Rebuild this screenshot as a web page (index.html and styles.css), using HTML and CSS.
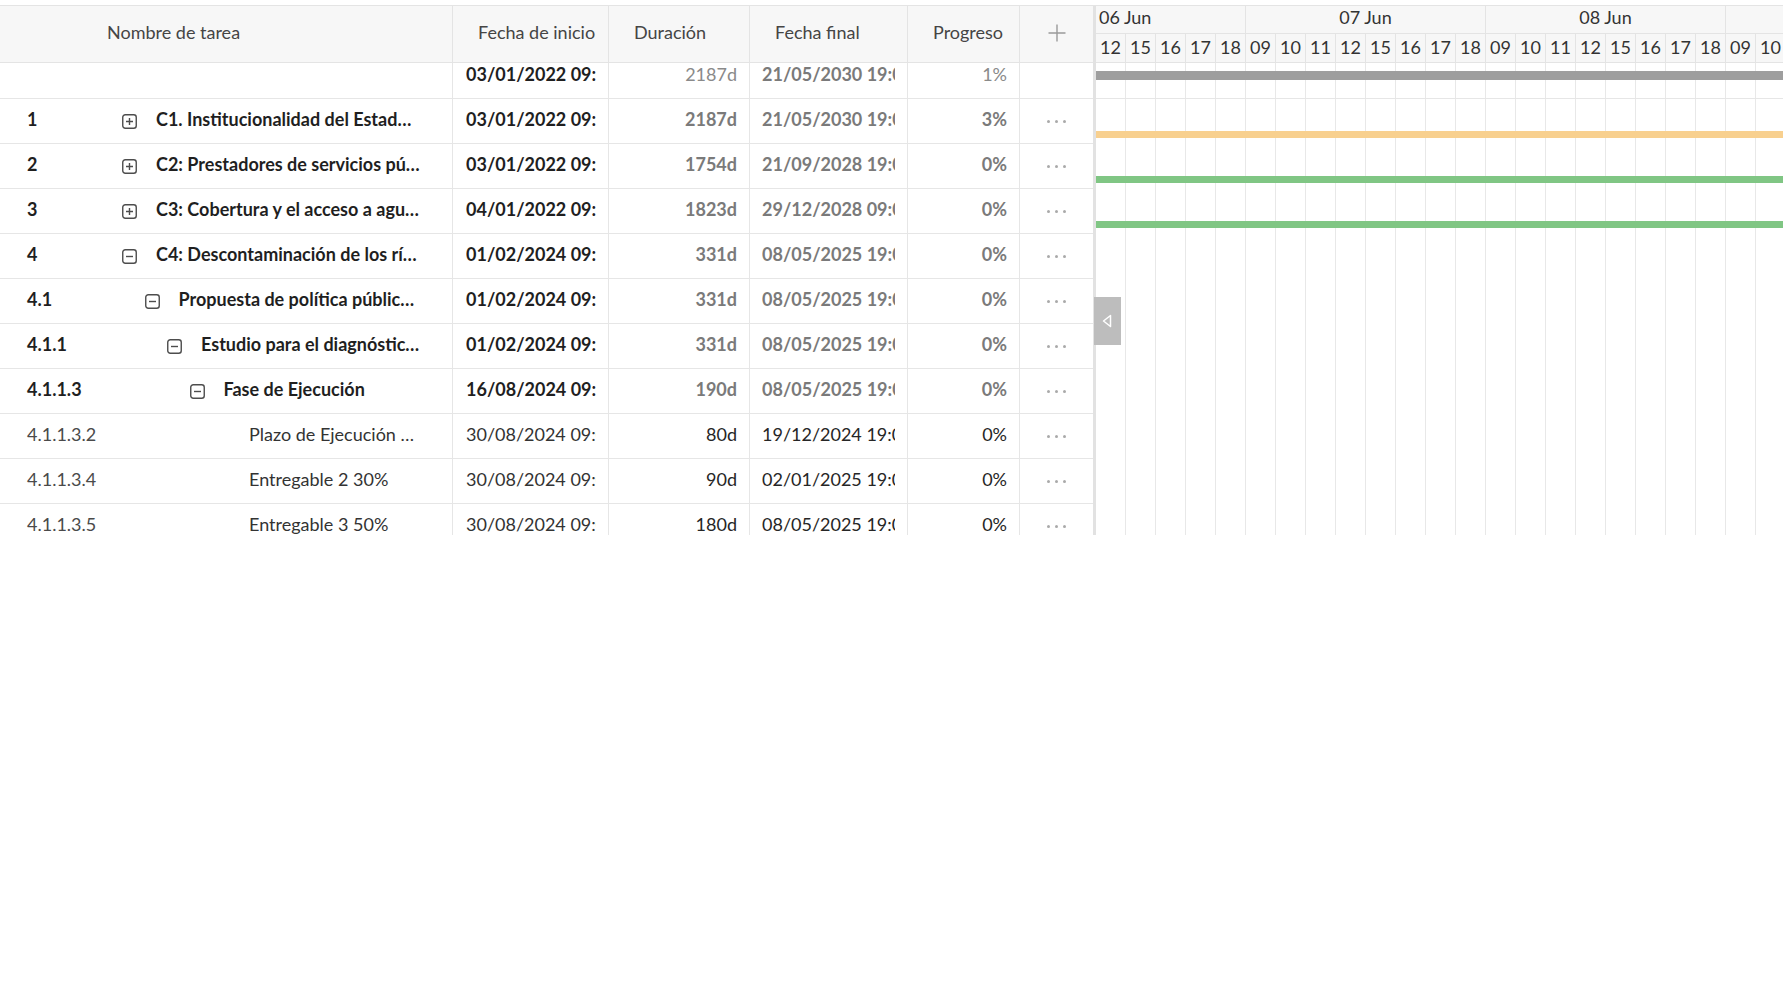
FILE: index.html
```html
<!DOCTYPE html>
<html lang="es">
<head>
<meta charset="utf-8">
<title>Gantt</title>
<link rel="stylesheet" href="styles.css">
</head>
<body>
<div class="gantt">
  <div class="grid">
    <div class="grid-head">
      <div class="hc c-name">Nombre de tarea</div>
      <div class="hc c-start">Fecha de inicio</div>
      <div class="hc c-dur">Duración</div>
      <div class="hc c-end">Fecha final</div>
      <div class="hc c-prog">Progreso</div>
      <div class="hc c-act">
        <svg class="plus" width="20" height="20" viewBox="0 0 20 20"><path d="M10 1.5v17M1.5 10h17" stroke="#9a9a9a" stroke-width="1.4" fill="none"/></svg>
      </div>
    </div>
    <div class="grid-body">
      <div class="rows">
        <div class="row summary">
          <div class="cell c-name"></div>
          <div class="cell c-start"><span class="clip">03/01/2022 09:00</span></div>
          <div class="cell c-dur">2187d</div>
          <div class="cell c-end"><span class="clip">21/05/2030 19:00</span></div>
          <div class="cell c-prog">1%</div>
          <div class="cell c-act"></div>
        </div>
        <div class="row parent">
          <div class="cell c-name lv1"><span class="num">1</span><svg class="tog" width="15" height="15" viewBox="0 0 15 15"><rect x="0.75" y="0.75" width="13.5" height="13.5" rx="2.5" fill="none" stroke="#4d4d4d" stroke-width="1.4"/><path d="M4 7.5h7M7.5 4v7" stroke="#4d4d4d" stroke-width="1.4"/></svg><span class="txt">C1. Institucionalidad del Estado para la gestión del agua</span></div>
          <div class="cell c-start"><span class="clip">03/01/2022 09:00</span></div>
          <div class="cell c-dur">2187d</div>
          <div class="cell c-end"><span class="clip">21/05/2030 19:00</span></div>
          <div class="cell c-prog">3%</div>
          <div class="cell c-act"><span class="dots"><i></i><i></i><i></i></span></div>
        </div>
        <div class="row parent">
          <div class="cell c-name lv1"><span class="num">2</span><svg class="tog" width="15" height="15" viewBox="0 0 15 15"><rect x="0.75" y="0.75" width="13.5" height="13.5" rx="2.5" fill="none" stroke="#4d4d4d" stroke-width="1.4"/><path d="M4 7.5h7M7.5 4v7" stroke="#4d4d4d" stroke-width="1.4"/></svg><span class="txt">C2: Prestadores de servicios públicos de agua</span></div>
          <div class="cell c-start"><span class="clip">03/01/2022 09:00</span></div>
          <div class="cell c-dur">1754d</div>
          <div class="cell c-end"><span class="clip">21/09/2028 19:00</span></div>
          <div class="cell c-prog">0%</div>
          <div class="cell c-act"><span class="dots"><i></i><i></i><i></i></span></div>
        </div>
        <div class="row parent">
          <div class="cell c-name lv1"><span class="num">3</span><svg class="tog" width="15" height="15" viewBox="0 0 15 15"><rect x="0.75" y="0.75" width="13.5" height="13.5" rx="2.5" fill="none" stroke="#4d4d4d" stroke-width="1.4"/><path d="M4 7.5h7M7.5 4v7" stroke="#4d4d4d" stroke-width="1.4"/></svg><span class="txt">C3: Cobertura y el acceso a agua potable</span></div>
          <div class="cell c-start"><span class="clip">04/01/2022 09:00</span></div>
          <div class="cell c-dur">1823d</div>
          <div class="cell c-end"><span class="clip">29/12/2028 09:00</span></div>
          <div class="cell c-prog">0%</div>
          <div class="cell c-act"><span class="dots"><i></i><i></i><i></i></span></div>
        </div>
        <div class="row parent">
          <div class="cell c-name lv1"><span class="num">4</span><svg class="tog" width="15" height="15" viewBox="0 0 15 15"><rect x="0.75" y="0.75" width="13.5" height="13.5" rx="2.5" fill="none" stroke="#4d4d4d" stroke-width="1.4"/><path d="M4 7.5h7" stroke="#4d4d4d" stroke-width="1.4"/></svg><span class="txt">C4: Descontaminación de los ríos</span></div>
          <div class="cell c-start"><span class="clip">01/02/2024 09:00</span></div>
          <div class="cell c-dur">331d</div>
          <div class="cell c-end"><span class="clip">08/05/2025 19:00</span></div>
          <div class="cell c-prog">0%</div>
          <div class="cell c-act"><span class="dots"><i></i><i></i><i></i></span></div>
        </div>
        <div class="row parent">
          <div class="cell c-name lv2"><span class="num">4.1</span><svg class="tog" width="15" height="15" viewBox="0 0 15 15"><rect x="0.75" y="0.75" width="13.5" height="13.5" rx="2.5" fill="none" stroke="#4d4d4d" stroke-width="1.4"/><path d="M4 7.5h7" stroke="#4d4d4d" stroke-width="1.4"/></svg><span class="txt">Propuesta de política pública de saneamiento</span></div>
          <div class="cell c-start"><span class="clip">01/02/2024 09:00</span></div>
          <div class="cell c-dur">331d</div>
          <div class="cell c-end"><span class="clip">08/05/2025 19:00</span></div>
          <div class="cell c-prog">0%</div>
          <div class="cell c-act"><span class="dots"><i></i><i></i><i></i></span></div>
        </div>
        <div class="row parent">
          <div class="cell c-name lv3"><span class="num">4.1.1</span><svg class="tog" width="15" height="15" viewBox="0 0 15 15"><rect x="0.75" y="0.75" width="13.5" height="13.5" rx="2.5" fill="none" stroke="#4d4d4d" stroke-width="1.4"/><path d="M4 7.5h7" stroke="#4d4d4d" stroke-width="1.4"/></svg><span class="txt">Estudio para el diagnóstico de la contaminación</span></div>
          <div class="cell c-start"><span class="clip">01/02/2024 09:00</span></div>
          <div class="cell c-dur">331d</div>
          <div class="cell c-end"><span class="clip">08/05/2025 19:00</span></div>
          <div class="cell c-prog">0%</div>
          <div class="cell c-act"><span class="dots"><i></i><i></i><i></i></span></div>
        </div>
        <div class="row parent">
          <div class="cell c-name lv4"><span class="num">4.1.1.3</span><svg class="tog" width="15" height="15" viewBox="0 0 15 15"><rect x="0.75" y="0.75" width="13.5" height="13.5" rx="2.5" fill="none" stroke="#4d4d4d" stroke-width="1.4"/><path d="M4 7.5h7" stroke="#4d4d4d" stroke-width="1.4"/></svg><span class="txt">Fase de Ejecución</span></div>
          <div class="cell c-start"><span class="clip">16/08/2024 09:00</span></div>
          <div class="cell c-dur">190d</div>
          <div class="cell c-end"><span class="clip">08/05/2025 19:00</span></div>
          <div class="cell c-prog">0%</div>
          <div class="cell c-act"><span class="dots"><i></i><i></i><i></i></span></div>
        </div>
        <div class="row leaf">
          <div class="cell c-name lv5"><span class="num">4.1.1.3.2</span><span class="txt">Plazo de Ejecución del estudio</span></div>
          <div class="cell c-start"><span class="clip">30/08/2024 09:00</span></div>
          <div class="cell c-dur">80d</div>
          <div class="cell c-end"><span class="clip">19/12/2024 19:00</span></div>
          <div class="cell c-prog">0%</div>
          <div class="cell c-act"><span class="dots"><i></i><i></i><i></i></span></div>
        </div>
        <div class="row leaf">
          <div class="cell c-name lv5"><span class="num">4.1.1.3.4</span><span class="txt">Entregable 2 30%</span></div>
          <div class="cell c-start"><span class="clip">30/08/2024 09:00</span></div>
          <div class="cell c-dur">90d</div>
          <div class="cell c-end"><span class="clip">02/01/2025 19:00</span></div>
          <div class="cell c-prog">0%</div>
          <div class="cell c-act"><span class="dots"><i></i><i></i><i></i></span></div>
        </div>
        <div class="row leaf">
          <div class="cell c-name lv5"><span class="num">4.1.1.3.5</span><span class="txt">Entregable 3 50%</span></div>
          <div class="cell c-start"><span class="clip">30/08/2024 09:00</span></div>
          <div class="cell c-dur">180d</div>
          <div class="cell c-end"><span class="clip">08/05/2025 19:00</span></div>
          <div class="cell c-prog">0%</div>
          <div class="cell c-act"><span class="dots"><i></i><i></i><i></i></span></div>
        </div>
      </div>
    </div>
  </div>

  <div class="chart">
    <div class="scale">
      <div class="days">
        <div class="day d5 first">06 Jun</div>
        <div class="day d8">07 Jun</div>
        <div class="day d8">08 Jun</div>
        <div class="day d8">09 Jun</div>
      </div>
      <div class="hours">
        <div class="hr">12</div><div class="hr">15</div><div class="hr">16</div><div class="hr">17</div><div class="hr">18</div>
        <div class="hr">09</div><div class="hr">10</div><div class="hr">11</div><div class="hr">12</div><div class="hr">15</div><div class="hr">16</div><div class="hr">17</div><div class="hr">18</div>
        <div class="hr">09</div><div class="hr">10</div><div class="hr">11</div><div class="hr">12</div><div class="hr">15</div><div class="hr">16</div><div class="hr">17</div><div class="hr">18</div>
        <div class="hr">09</div><div class="hr">10</div><div class="hr">11</div><div class="hr">12</div><div class="hr">15</div>
      </div>
    </div>
    <div class="chart-body">
      <div class="rows">
        <div class="crow summary"><div class="bar bar-sum"></div></div>
        <div class="crow"><div class="bar bar-orange"></div></div>
        <div class="crow"><div class="bar bar-green"></div></div>
        <div class="crow"><div class="bar bar-green"></div></div>
        <div class="crow"></div>
        <div class="crow"></div>
        <div class="crow"></div>
        <div class="crow"></div>
        <div class="crow"></div>
        <div class="crow"></div>
        <div class="crow"></div>
      </div>
    </div>
  </div>

  <div class="handle">
    <svg width="12" height="14" viewBox="0 0 12 14"><path d="M9.5 1.5L2.5 7l7 5.5z" fill="none" stroke="#fff" stroke-width="1.5" stroke-linejoin="round"/></svg>
  </div>
</div>
</body>
</html>
```

FILE: styles.css
```css
* {
  box-sizing: border-box;
}

html, body {
  margin: 0;
  padding: 0;
  background: #fff;
}

body {
  font-family: Lato, "Open Sans", "Liberation Sans", sans-serif;
  font-size: 18px;
  color: #222;
}

.gantt {
  position: relative;
  display: flex;
  margin-top: 5px;
  height: 530px;
  border-top: 1px solid #e4e4e4;
  overflow: hidden;
}

/* ---------- grid ---------- */
.grid {
  width: 1093px;
  flex: none;
  display: flex;
  flex-direction: column;
}

.grid-head {
  display: flex;
  height: 57px;
  background: #f7f7f7;
  border-bottom: 1px solid #e4e4e4;
  color: #454545;
}

.hc {
  display: flex;
  align-items: center;
  height: 100%;
  padding-left: 25px;
  padding-bottom: 4px;
  border-right: 1px solid #e4e4e4;
  white-space: nowrap;
}

.hc.c-name {
  padding-left: 107px;
}

.hc.c-act {
  justify-content: center;
  padding-left: 0;
  padding-bottom: 2px;
  border-right: none;
}

.c-name { width: 453px; }
.c-start { width: 156px; }
.c-dur { width: 141px; }
.c-end { width: 158px; }
.c-prog { width: 112px; }
.c-act { width: 73px; }

.grid-body {
  flex: 1;
  overflow: hidden;
}

.rows {
  margin-top: -9px;
}

.row {
  display: flex;
  height: 45px;
  border-bottom: 1px solid #e6e6e6;
}

.cell {
  display: flex;
  align-items: center;
  height: 100%;
  padding-bottom: 4px;
  border-right: 1px solid #e6e6e6;
  white-space: nowrap;
  overflow: hidden;
}

.cell.c-act {
  border-right: none;
  justify-content: center;
  padding-bottom: 0;
}

.cell.c-name {
  padding-left: 27px;
  padding-right: 32px;
}

.cell.c-start {
  padding-left: 13px;
  padding-right: 12px;
}

.cell.c-end {
  padding-left: 12px;
  padding-right: 12px;
}

.cell.c-dur,
.cell.c-prog {
  justify-content: flex-end;
  padding-right: 12px;
}

.clip {
  display: block;
  width: 100%;
  overflow: hidden;
  white-space: nowrap;
}

.num {
  flex: none;
  width: 95px;
}

.lv2 .num { width: 117.5px; }
.lv3 .num { width: 140px; }
.lv4 .num { width: 162.5px; }
.lv5 .num { width: 222px; }

.tog {
  flex: none;
  margin-right: 19px;
  margin-top: 5px;
}

.txt {
  flex: 1;
  min-width: 0;
  overflow: hidden;
  text-overflow: ellipsis;
  white-space: nowrap;
}

/* row text styles */
.parent {
  font-weight: 700;
  color: #1f1f1f;
}

.parent .c-dur,
.parent .c-end,
.parent .c-prog {
  color: #7a7a7a;
}

.summary .c-start {
  font-weight: 700;
  color: #1f1f1f;
}

.summary .c-dur,
.summary .c-prog {
  color: #8a8a8a;
}

.summary .c-end {
  font-weight: 700;
  color: #7a7a7a;
}

.leaf {
  color: #333;
}

.leaf .num {
  color: #4a4a4a;
}

.leaf .c-dur,
.leaf .c-end,
.leaf .c-prog {
  color: #262626;
}

.dots {
  display: flex;
  gap: 5px;
}

.dots i {
  display: block;
  width: 3px;
  height: 3px;
  border-radius: 50%;
  background: #aaa;
}

/* ---------- chart ---------- */
.chart {
  flex: 1;
  min-width: 0;
  display: flex;
  flex-direction: column;
  border-left: 3px solid #e2e2e2;
  overflow: hidden;
}

.scale {
  height: 57px;
  flex: none;
  background: #f7f7f7;
  border-bottom: 1px solid #e4e4e4;
  color: #333;
}

.days {
  display: flex;
  height: 28px;
  border-bottom: 1px solid #e4e4e4;
}

.day {
  flex: none;
  display: flex;
  align-items: center;
  justify-content: center;
  height: 100%;
  padding-bottom: 6px;
  border-right: 1px solid #e4e4e4;
  white-space: nowrap;
}

.day.first {
  justify-content: flex-start;
  padding-left: 3px;
}

.d5 { width: 150px; }
.d8 { width: 240px; }

.hours {
  display: flex;
  height: 28px;
}

.hr {
  flex: none;
  width: 30px;
  display: flex;
  align-items: center;
  justify-content: center;
  height: 100%;
  padding-bottom: 2px;
  border-right: 1px solid #e4e4e4;
}

.chart-body {
  flex: 1;
  overflow: hidden;
  background-image: repeating-linear-gradient(to right, transparent 0 29px, #e8e8e8 29px 30px);
}

.crow {
  height: 45px;
  overflow: hidden;
}

.crow.summary {
  border-bottom: 1px solid #e6e6e6;
}

.bar {
  width: 100%;
  margin-top: 32px;
  height: 7px;
}

.bar-sum {
  margin-top: 17px;
  height: 9px;
  background: #9e9e9e;
}

.bar-orange {
  background: #f8d08f;
}

.bar-green {
  background: #80c684;
}

/* ---------- grid collapse handle ---------- */
.handle {
  position: absolute;
  left: 1094px;
  top: 291px;
  width: 27px;
  height: 48px;
  background: #bdbdbd;
  display: flex;
  align-items: center;
  justify-content: center;
  padding-right: 1px;
}
```
